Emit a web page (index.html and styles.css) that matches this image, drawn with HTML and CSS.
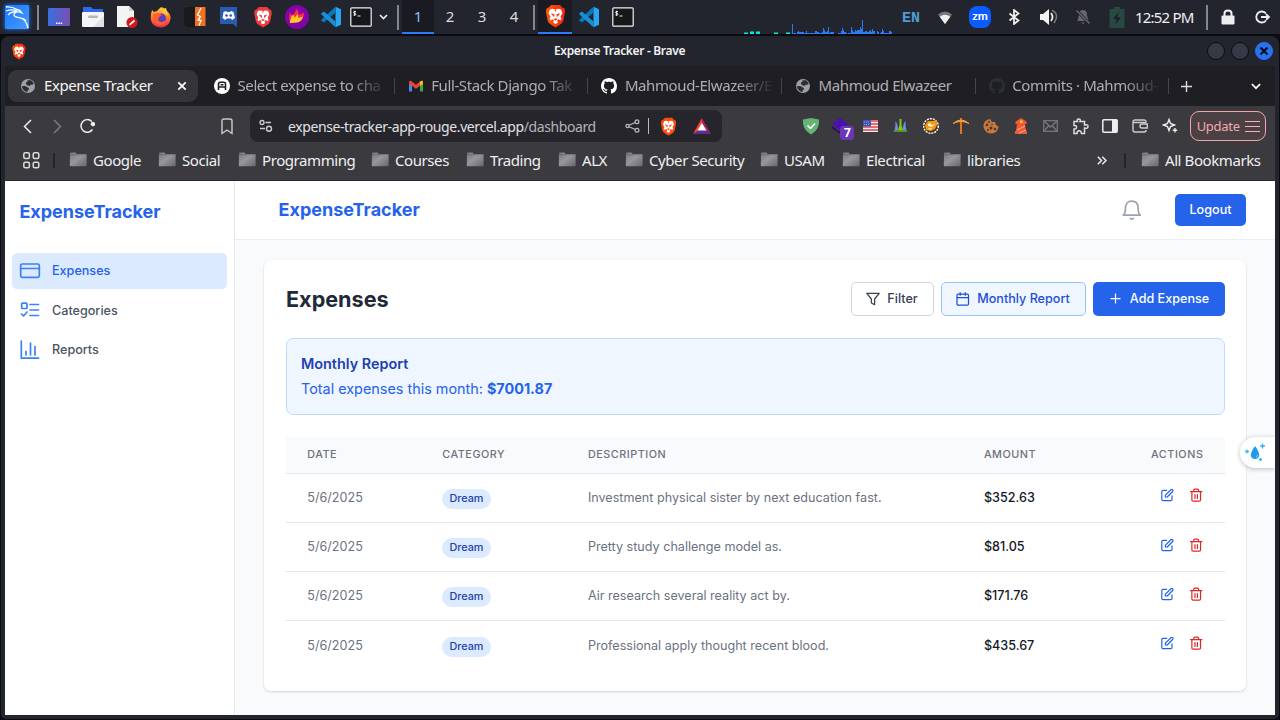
FILE: index.html
```html
<!DOCTYPE html>
<html lang="en">
<head>
<meta charset="utf-8">
<title>Expense Tracker</title>
<link rel="stylesheet" href="styles.css">
</head>
<body>
<svg class="defs" width="0" height="0">
  <defs>
    <linearGradient id="gKali" x2="1" y2="1"><stop stop-color="#1478ff"/><stop offset="1" stop-color="#4a9bff"/></linearGradient>
    <linearGradient id="gDesk" x2="1" y2="0"><stop stop-color="#3b6fe0"/><stop offset="1" stop-color="#7a4fb0"/></linearGradient>
    <linearGradient id="gFox" x2="0" y2="1"><stop stop-color="#ffd43a"/><stop offset=".5" stop-color="#ff7a2a"/><stop offset="1" stop-color="#f0265a"/></linearGradient>
    <linearGradient id="gBrave" x2="1" y2="0"><stop stop-color="#ff5a00"/><stop offset="1" stop-color="#f52010"/></linearGradient>
    <linearGradient id="gFolder" x2="1" y2="1"><stop stop-color="#77777b"/><stop offset=".45" stop-color="#98989c"/><stop offset="1" stop-color="#68686c"/></linearGradient>
    <symbol id="folder" viewBox="0 0 18 15"><path d="M1 1.500Q1 .5 2 .5h4.500l1.200 1.500H17q.6 0 .6.6V13.500q0 .7-.7.7H1.500q-.7 0-.7-.7z" fill="url(#gFolder)"/><path d="M1 2.700h16.500" stroke="#5c5c60" stroke-width=".6"/></symbol>
    <symbol id="lion" viewBox="0 0 20 24"><path d="M5.500 1h9l2 2.200L19 4.500l.6 3-1.800 9.500Q17 19.500 14 21l-4 2.500L6 21Q3 19.500 2.200 17L.4 7.500l.6-3 2.500-1.300z"/><path fill="#fff" d="M4.500 5.500 7 4.800 10 5.500l3-.7 2.500.7L17 9l-2 3.800 1 1.700-1 2-2-1.200-1.500 1.500 1 1.700L10 20l-2.500-1.500 1-1.700L7 15.300l-2 1.200-1-2 1-1.700L3 9z"/><path d="M5.500 9.200 9 10.300l-.3 3L6.500 11zM14.500 9.200 11 10.300l.3 3L13.500 11zM8 15l2-.8 2 .8-2 1.700zM9.300 5.500h1.400l-.7 3z"/></symbol>
    <symbol id="vscode" viewBox="0 0 22 22"><path d="M15.500.8 21 3.200v15.600l-5.500 2.400z" fill="#2aa5f2"/><path d="M15.500.8v5.700L4 16.500 1 14.500l1-1.500z" fill="#0879bd"/><path d="M15.500 21.200v-5.700L4 5.500 1 7.500 2 9z" fill="#1a8fd6"/></symbol>
    <symbol id="term" viewBox="0 0 22 20"><rect x=".8" y=".8" width="20.400" height="18.400" rx="1" fill="#151719" stroke="#f2f2f2" stroke-width="1.200"/><path d="M6 4.700q-2.500-.8-2.500.6 0 .9 1.200 1t1.200 1q0 1.300-2.500.6M4.700 3.700v5.200M7.500 9h3" fill="none" stroke="#fff" stroke-width=".9"/></symbol>
    <symbol id="globe" viewBox="0 0 16 16"><circle cx="8" cy="8" r="7" fill="#9ba0a7"/><path d="M1.800 8.200 4.500 8q2.500 0 3 1.500 1.500 0 1.500 1.200t-1.200 1.300L7.500 14Q3 13.500 1.800 8.200zM7.500 2.200h3.500l2.800 3-1.300 1.600H10.500L9.500 8 7.500 7.200 6 6V4.300L7.500 4z" fill="#2c2c31"/></symbol>
    <symbol id="github" viewBox="0 0 16 16"><path d="M8 0C3.580 0 0 3.580 0 8c0 3.540 2.290 6.530 5.470 7.590.4.070.55-.17.55-.38 0-.19-.01-.82-.01-1.490-2.010.37-2.530-.49-2.690-.94-.09-.23-.48-.94-.82-1.130-.28-.15-.68-.52-.01-.53.63-.01 1.080.58 1.230.82.72 1.210 1.870.87 2.330.66.07-.52.28-.87.510-1.070-1.780-.2-3.640-.89-3.640-3.950 0-.87.31-1.590.82-2.150-.08-.2-.36-1.020.08-2.120 0 0 .67-.21 2.200.82.64-.18 1.320-.27 2-.27s1.360.09 2 .27c1.530-1.040 2.200-.82 2.200-.82.44 1.100.16 1.920.08 2.120.51.56.82 1.270.82 2.150 0 3.070-1.870 3.750-3.650 3.950.29.25.54.73.54 1.480 0 1.070-.01 1.930-.01 2.200 0 .21.15.46.55.38A8.010 8.010 0 0 0 16 8c0-4.420-3.580-8-8-8z"/></symbol>
    <symbol id="edit" viewBox="0 0 24 24"><path d="M11 4H5a2 2 0 0 0-2 2v13a2 2 0 0 0 2 2h13a2 2 0 0 0 2-2v-6M18.200 2.900a2 2 0 0 1 2.900 2.900L12 15H9v-3z"/></symbol>
    <symbol id="trash" viewBox="0 0 24 24"><path d="M2.500 6h19M4.800 6v14a2 2 0 0 0 2 2h10.400a2 2 0 0 0 2-2V6M8 6V3.800A1.800 1.800 0 0 1 9.800 2h4.400A1.800 1.800 0 0 1 16 3.800V6M10 11v6.500M14 11v6.500"/></symbol>
  </defs>
</svg>

<div class="desktop">
  <div class="panel">
    <div class="launchers">
      <svg class="kali" width="26" height="26" viewBox="0 0 26 26"><rect x="1" y="1" width="24" height="24" rx="1" fill="url(#gKali)"/><path d="M2 3q6-.5 11 2.500M2 7q5-2 11-.5M4 11q3-3.500 9-3.500M13 5.500q3 .3 5 3.500-3-1.500-5-1M13 8q-4.500 1.500-2.500 4 1.500 1.500 5.500 1.800 6 .8 8 10.200M15.500 13.800q3.500.2 6.500 2.700" fill="none" stroke="#fff" stroke-width="1.300"/></svg>
      <i class="sep"></i>
      <div class="apps">
        <svg width="22" height="18" viewBox="0 0 22 18"><rect width="22" height="18" rx="1" fill="url(#gDesk)"/><path d="M8 15.200h1.500M10.300 15.200h1.500M12.600 15.200h1.500" stroke="#fff" stroke-width="1.400"/></svg>
        <svg width="22" height="20" viewBox="0 0 22 20"><path d="M1 0h8l2 2h10v5H1z" fill="#2c6bed"/><rect y="5" width="22" height="15" rx="1" fill="#f5f5f5"/><path d="M22 9v11H11z" fill="#e2e2e2"/><rect x="6" y="8.500" width="10" height="2.500" rx="1.200" fill="#b5b5b5"/></svg>
        <svg width="22" height="22" viewBox="0 0 22 22"><path d="M1 0h12l5 5v16H1z" fill="#f4f4f4"/><path d="M13 0v5h5z" fill="#ccc"/><circle cx="16" cy="16.500" r="5.500" fill="#d0181e"/><path d="m13.500 18.800 5-4.300" stroke="#fff" stroke-width="1.700"/></svg>
        <svg width="22" height="22" viewBox="0 0 22 22"><path d="M2 4l2 2 3-1 4-4 2 2 3-1 1 3q4 3 3.500 8Q19 21 11 21.500 2 21 .7 13 .5 8 2 4z" fill="url(#gFox)"/><circle cx="11" cy="12.500" r="5" fill="#5a3fc0"/><path d="M3 8l5-1 4 2-3 2-1 3q3 4 8 0-1 6-7 5-6-2-6-11z" fill="#ff5e2e"/><path d="M12 1q6 3 6 9-3-3-5-3z" fill="#ffc83a"/></svg>
        <svg width="22" height="22" viewBox="0 0 22 22"><path d="M0 3 3 1h8v20H3l-3-2z" fill="#17191d"/><path d="M11 1h10.500v19H11z" fill="#f4711f"/><path d="m17 2-3.500 7 3 1.500L14 14l3 .5-2 5" fill="none" stroke="#fff" stroke-width="1.300"/></svg>
        <svg width="20" height="21" viewBox="0 0 20 21"><path d="M1 0h17v20.500L14 17H1z" fill="#2b5bb0"/><path d="M4.500 5 7 4l1 1h3l1-1 2.500 1 1.500 6-3 2-1-1.500H7.500L6.500 13l-3-2z" fill="#fff"/><circle cx="7.500" cy="8.500" r="1.300" fill="#2b5bb0"/><circle cx="11.700" cy="8.500" r="1.300" fill="#2b5bb0"/></svg>
        <svg width="20" height="22" fill="#f0393d"><use href="#lion"/></svg>
        <svg width="24" height="24" viewBox="0 0 24 24"><circle cx="12" cy="12" r="12" fill="#8204a8"/><path d="M5 18Q3.500 11 5 7.500l2.500 4L11.500 4q3 3 2 6l5.500-2.500q0 6.500-4.500 9-4.500 1.500-9.500 1.500z" fill="#ff2a4c"/><path d="M5 18Q5 13 8 9.500q1.500 1 1.500 3.500L12.500 9q1.500 2 .5 4l5-1.500q-1.500 5.500-6 6z" fill="#ffc928"/></svg>
        <svg width="22" height="22"><use href="#vscode"/></svg>
      </div>
      <svg class="term1" width="22" height="20"><use href="#term"/></svg>
      <svg class="chev" width="9" height="6" viewBox="0 0 9 6"><path d="m1 1 3.500 3.500L8 1" fill="none" stroke="#eee" stroke-width="1.600"/></svg>
    </div>
    <i class="sep"></i>
    <div class="spaces"><span class="space active">1</span><span class="space">2</span><span class="space">3</span><span class="space">4</span></div>
    <i class="sep"></i>
    <div class="tasks">
      <span class="task active"><svg width="21" height="24" fill="url(#gBrave)"><use href="#lion"/></svg></span>
      <span class="task"><svg width="22" height="22"><use href="#vscode"/></svg></span>
      <span class="task"><svg width="22" height="20"><use href="#term"/></svg></span>
    </div>
    <svg class="graph" width="150" height="20" viewBox="0 0 150 20"><g fill="#05e8cf"><path d="M0 18h4v2H0zM6 17h4v3H6zM12 17h4v3h-4zM30 18h4v2h-4zM42 18h4v2h-4z"/></g><g fill="#148b82"><path d="M0 18h4v1H0zM6 17h4v1H6zM12 17h4v1h-4zM30 18h4v1h-4zM42 18h4v1h-4z"/></g><path fill="#2b7bf4" d="M48 20V10h1v9h3v1zM53 20v-2h1v-1h1v1h5v1h2v-2h1v2h8v-2h2v1h2v1h3v-1h1v-4h1v2h1v2h2v-1h1v-4h1v6h1v-1h4v2zM94 20v-1h3v-2h1v-3h1v2h1v2h2v1h1v1zM104 20v-1h3v-6h1v3h1v2h2v-2h1v1h1v-1h3v-3h1v2h1V6h1v12h2v-1h2v1h2v-1h1v-1h1v2h1v-3h1v2h2v3zM133 20v-3h1v1h1v2zM136 20v-1h1v-1h1v-3h1v2h1v2h5v-2h2v1h1v2z"/></svg>
    <div class="tray">
      <span class="lang">EN</span>
      <svg class="wifi" width="14" height="13" viewBox="0 0 14 13"><path d="M7 13 0 3.500Q7-2.500 14 3.500z" fill="#777"/><path d="M7 13 1.700 5.800Q7 1.500 12.300 5.800z" fill="#f0f0f0"/></svg>
      <span class="zm">zm</span>
      <svg class="bt" width="12" height="16" viewBox="0 0 12 16"><path d="m1.500 4.500 9 7L6 15V1l4.500 3.500-9 7" fill="none" stroke="#eee" stroke-width="1.800"/></svg>
      <svg class="vol" width="18" height="16" viewBox="0 0 18 16"><path d="M0 5h3l6-5v16l-6-5H0z" fill="#f3f3f3"/><path d="M11 4q3 4 0 8" fill="none" stroke="#eee" stroke-width="1.800"/><path d="M12 1.200Q20 5 14 14" fill="none" stroke="#777" stroke-width="1.500"/></svg>
      <svg class="mute" width="14" height="16" viewBox="0 0 14 16"><path d="M7 1q4 0 4 5l1.500 6H1.500L3 6q0-5 4-5zM5 13.500h4L7 15z" fill="#66676b"/><path d="m0 1 14 14" stroke="#23252e" stroke-width="3"/><path d="m.5 1.500 13 13" stroke="#6c6d70" stroke-width="1.300"/></svg>
      <svg class="batt" width="16" height="21" viewBox="0 0 16 21"><path d="M5 0h6v2h4.500v19H.5V2H5z" fill="#28493f"/><path d="M9.500 5 4 12h3.500L6.500 17 12 10.500H8.500z" fill="#18212b"/></svg>
      <span class="clock">12:52 PM</span>
      <i class="sep"></i>
      <svg class="lock" width="14" height="16" viewBox="0 0 14 16"><path d="M3.500 8V4.500q0-3 3.500-3t3.500 3V8" fill="none" stroke="#eee" stroke-width="2"/><rect x=".5" y="6.500" width="13" height="9" rx="1" fill="#eee"/></svg>
      <svg class="exit" width="16" height="14" viewBox="0 0 16 14"><path d="M11 3.500A5.500 5.500 0 1 0 11 10.500" fill="none" stroke="#eee" stroke-width="1.800"/><path d="M6 7h7M11 4.200 14 7l-3 2.800" fill="none" stroke="#eee" stroke-width="1.800"/></svg>
    </div>
  </div>

  <div class="window">
    <div class="titlebar">
      <svg width="14" height="17" fill="url(#gBrave)"><use href="#lion"/></svg>
      <span class="wtitle">Expense Tracker - Brave</span>
      <div class="wbtns"><i></i><i></i><b><svg width="10" height="10" viewBox="0 0 10 10"><path d="m1.500 1.500 7 7m0-7-7 7" stroke="#0b0f18" stroke-width="2.200"/></svg></b></div>
    </div>
    <div class="client">
      <div class="tabs">
        <div class="tab current"><svg width="16" height="16"><use href="#globe"/></svg><span class="label">Expense Tracker</span><svg class="close" width="10" height="10" viewBox="0 0 10 10"><path d="m1.300 1.300 7.400 7.400m0-7.400-7.400 7.400" stroke="#fff" stroke-width="1.700"/></svg></div>
        <div class="tab"><svg width="16" height="16" viewBox="0 0 16 16"><circle cx="8" cy="8" r="8" fill="#fff"/><path d="M4.500 12V6q0-1.700 1.700-1.700h3.600q1.700 0 1.700 1.700v6M4.500 9h7M6.500 6.700h3" fill="none" stroke="#1f1e23" stroke-width="1.600"/></svg><span class="label fade">Select expense to cha</span></div>
        <div class="tab"><svg width="16" height="16" viewBox="0 0 16 16"><path d="M1 13.500V3.500l3 2v8z" fill="#4285f4"/><path d="M12 13.500v-8l3-2v10z" fill="#34a853"/><path d="M12 3.500 14 2.500l1 1v2.500l-3 2z" fill="#fbbc04"/><path d="M1 3.500 2.500 2.600 8 6.700l4-3.200v4.200L8 10.800 1 5.700z" fill="#ea4335"/></svg><span class="label fade">Full-Stack Django Tak</span></div>
        <div class="tab"><svg width="16" height="16" fill="#fff"><use href="#github"/></svg><span class="label fade">Mahmoud-Elwazeer/E</span></div>
        <div class="tab"><svg width="16" height="16"><use href="#globe"/></svg><span class="label">Mahmoud Elwazeer</span></div>
        <div class="tab"><svg width="16" height="16" fill="#283034"><use href="#github"/></svg><span class="label fade">Commits · Mahmoud-</span></div>
        <svg class="plus" width="11" height="11" viewBox="0 0 11 11"><path d="M5.500 0v11M0 5.500h11" stroke="#ddd" stroke-width="1.400"/></svg>
        <svg class="more" width="10" height="7" viewBox="0 0 10 7"><path d="m.8 1 4.200 4.200L9.200 1" fill="none" stroke="#fff" stroke-width="1.700"/></svg>
      </div>
      <div class="toolbar">
        <svg class="back" width="9" height="15" viewBox="0 0 9 15"><path d="m8 1-6.500 6.500L8 14" fill="none" stroke="#eee" stroke-width="1.500"/></svg>
        <svg class="fwd" width="9" height="15" viewBox="0 0 9 15"><path d="m1 1 6.500 6.500L1 14" fill="none" stroke="#79797e" stroke-width="1.500"/></svg>
        <svg class="reload" width="17" height="16" viewBox="0 0 17 16"><path d="M12.800 3.500A6.300 6.300 0 1 0 13.500 11.500" fill="none" stroke="#eee" stroke-width="1.500"/><path d="M14 3.800q2.500.5 2 3.200-.8 2-3.200 1-2-1.500-.8-3.200.8-1 2-1z" fill="#eee"/></svg>
        <svg class="mark" width="12" height="17" viewBox="0 0 12 17"><path d="M1 3q0-2 2-2h6q2 0 2 2v12.500L6 12l-5 3.500z" fill="none" stroke="#ccc" stroke-width="1.400"/></svg>
        <div class="url">
          <svg width="14" height="14" viewBox="0 0 14 14" fill="none" stroke="#ccc" stroke-width="1.400"><circle cx="3" cy="3.500" r="2"/><path d="M6.500 3.500H12M1 9.500h5"/><circle cx="10" cy="9.700" r="2.500"/></svg>
          <span class="addr">expense-tracker-app-rouge.vercel.app<span class="path">/dashboard</span></span>
          <svg class="share" width="15" height="14" viewBox="0 0 15 14" fill="none" stroke="#bbb" stroke-width="1.200"><circle cx="12" cy="2.800" r="1.900"/><circle cx="12" cy="11.200" r="1.900"/><circle cx="2.500" cy="7" r="1.600"/><path d="M4 6.300 10.200 3.500M4 7.700l6.200 2.800"/></svg>
          <i class="bar"></i>
          <svg class="shield" width="17" height="19" fill="#ff4a0c"><use href="#lion"/></svg>
          <svg class="bat" width="18" height="16" viewBox="0 0 18 16"><path d="M9 0 0 16l9-5z" fill="#f9452c"/><path d="m9 0 9 16-9-5z" fill="#9e1f63"/><path d="m0 16 9-6 9 6z" fill="#5d2d91"/><path d="m9 5 4.500 7.500h-9z" fill="#fff"/></svg>
        </div>
        <div class="exts">
          <svg width="16" height="17" viewBox="0 0 16 17"><path d="M0 1.500 8 0l8 1.500Q17 11 8 16.500-1 11 0 1.500z" fill="#63b476"/><path d="m4.500 7.500 3 3 4.500-5" fill="none" stroke="#fff" stroke-width="1.500"/></svg>
          <span class="cube"><svg width="17" height="17" viewBox="0 0 17 17"><path d="m0 6 8-6 8 6-8 6z" fill="#4b0fb6"/><path d="m0 8 8 6v2L0 10z" fill="#2c0871"/></svg><b>7</b></span>
          <svg width="15" height="12" viewBox="0 0 15 12"><rect width="15" height="12" fill="#eee"/><path d="M0 1h15M0 4h15M0 7h15M0 10h15" stroke="#dd4450" stroke-width="1.500"/><rect width="8" height="6.500" fill="#4054b2"/><path d="M1 2h6M1 4.500h6" stroke="#bbc3ee" stroke-width=".7" stroke-dasharray="1"/></svg>
          <svg width="15" height="14" viewBox="0 0 15 14"><path d="M.5 13q2-2 2-11 2.500 3 3 11zM9.500 13q0-8 3-11 0 9 2 11z" fill="#6c8fe0"/><path d="M4.500 13 6.500 6V0h2v6l2 7z" fill="#86c51c"/><path d="M1 12h13" stroke="#50880e" stroke-width="1.500"/></svg>
          <svg width="16" height="16" viewBox="0 0 16 16"><circle cx="8" cy="8" r="7.300" fill="#4a3520" stroke="#fff" stroke-width="1.400" stroke-dasharray="2 1"/><path d="m2 7 3-4h5l4-1v5l-2 4-4 2-5-1z" fill="#f5980f"/><path d="m5 6 2-1 2 2 3-1-3 3-4-1zM5 10l4 .5-2 1.500z" fill="#fff1cf"/></svg>
          <svg width="16" height="16" viewBox="0 0 16 16"><path d="M8 0v16" stroke="#d9781c" stroke-width="2"/><path d="M0 5.500q8-7 16 0-8-4-16 0z" fill="#f5a13c" stroke="#f5a13c"/></svg>
          <svg width="16" height="16" viewBox="0 0 16 16"><path d="M7 1q-7 1-6.500 8Q2 15 8 15.500 15 15 15.500 8.500L13 7 12 4 9 4z" fill="#c5793c"/><g fill="#563222"><circle cx="4" cy="7" r="1.300"/><circle cx="8" cy="10" r="1.500"/><circle cx="6" cy="4" r="1"/><circle cx="12" cy="11" r="1.200"/><circle cx="5" cy="12" r="1"/></g><circle cx="9" cy="6.500" r="1" fill="#458"/></svg>
          <svg width="14" height="16" viewBox="0 0 14 16"><path d="M7 0 4 2 1.500 3.500V6h11V3.500L10 2zM3 6h8l1 7H2zM1 13h12v3H1z" fill="#f35a33"/><rect x="6" y="2.500" width="2.500" height="2.500" fill="#ffd84a"/><path d="M3 12 11 8M5 15l7-3" stroke="#ffb49c"/></svg>
          <svg width="15" height="12" viewBox="0 0 15 12" fill="none" stroke="#77777b" stroke-width="1.300"><rect x=".7" y=".7" width="13.600" height="10.600"/><path d="m1 1 6.500 6L14 1M1 11l4.500-5M14 11 9.500 6"/></svg>
          <svg width="17" height="17" viewBox="0 0 17 17" fill="none" stroke="#ddd" stroke-width="1.500"><path d="M2 3.500h3.500Q4.500 1 6.700 1T8 3.500h4.500V7Q16 6 16 8.500T12.500 10v5.500H9.500Q9 12.500 7 12.800T5 15.500H2V11q2.500.3 2.500-1.800T2 7.500z"/></svg>
          <svg width="16" height="14" viewBox="0 0 16 14"><rect x=".8" y=".8" width="14.400" height="12.400" rx="1" fill="none" stroke="#eee" stroke-width="1.500"/><path d="M10 1h5v12h-5z" fill="#eee"/></svg>
          <svg width="16" height="14" viewBox="0 0 16 14" fill="none" stroke="#ccc" stroke-width="1.400"><path d="M14 3.500V3q0-2-2-2H3Q1 1 1 3v8q0 2 2 2h9q2 0 2-1.500V11M1 3.500h11q2 0 2 1"/><path d="M15.300 5H10q-2 0-2 2t2 2h5.300z"/></svg>
          <svg width="16" height="16" viewBox="0 0 16 16" fill="none" stroke="#eee" stroke-width="1.400"><path d="m7 1.500 1.500 4 4 1.500-4 1.500-1.500 4-1.500-4-4-1.500 4-1.500zM13 10v4.500M10.700 12.300h4.500"/></svg>
        </div>
        <span class="update">Update<svg width="15" height="11" viewBox="0 0 15 11"><path d="M0 .5h15M0 5.500h15M0 10.500h15" stroke="#f5b1b5"/></svg></span>
      </div>
      <div class="bookmarks">
        <svg class="grid" width="17" height="17" viewBox="0 0 17 17" fill="none" stroke="#ddd" stroke-width="1.500"><rect x=".8" y=".8" width="5.600" height="5.600" rx="1.500"/><rect x="10.200" y=".8" width="5.600" height="5.600" rx="1.500"/><rect x=".8" y="10.200" width="5.600" height="5.600" rx="1.500"/><rect x="10.200" y="10.200" width="5.600" height="5.600" rx="1.500"/></svg>
        <i class="bsep"></i>
        <span class="bm bm-a"><svg width="18" height="15"><use href="#folder"/></svg>Google</span>
        <span class="bm bm-b"><svg width="18" height="15"><use href="#folder"/></svg>Social</span>
        <span class="bm bm-c"><svg width="18" height="15"><use href="#folder"/></svg>Programming</span>
        <span class="bm bm-d"><svg width="18" height="15"><use href="#folder"/></svg>Courses</span>
        <span class="bm bm-e"><svg width="18" height="15"><use href="#folder"/></svg>Trading</span>
        <span class="bm bm-f"><svg width="18" height="15"><use href="#folder"/></svg>ALX</span>
        <span class="bm bm-g"><svg width="18" height="15"><use href="#folder"/></svg>Cyber Security</span>
        <span class="bm bm-h"><svg width="18" height="15"><use href="#folder"/></svg>USAM</span>
        <span class="bm bm-i"><svg width="18" height="15"><use href="#folder"/></svg>Electrical</span>
        <span class="bm"><svg width="18" height="15"><use href="#folder"/></svg>libraries</span>
        <svg class="over" width="10" height="9" viewBox="0 0 10 9"><path d="m.8.800 3.700 3.700L.8 8.200M5.300.8 9 4.500 5.300 8.200" fill="none" stroke="#eee" stroke-width="1.500"/></svg>
        <i class="bsep right"></i>
        <span class="bm all"><svg width="18" height="15"><use href="#folder"/></svg>All Bookmarks</span>
      </div>

      <div class="page">
        <aside class="sidebar">
          <div class="brand">ExpenseTracker</div>
          <nav class="nav">
            <a class="item on"><svg width="22" height="22" viewBox="0 0 22 22"><rect x="1.700" y="4" width="18.600" height="13.400" rx="1.600"/><path d="M1.500 8.500h19"/></svg>Expenses</a>
            <a class="item"><svg width="22" height="22" viewBox="0 0 22 22"><rect x="2.700" y="4.200" width="5.300" height="5.300" rx=".8"/><path d="m2.500 15 2 2L8 13M11 5.500h8.500M11 11h8.500M11 16.500h8.500"/></svg>Categories</a>
            <a class="item"><svg width="22" height="22" viewBox="0 0 22 22"><path d="M2.300 2v17.200H19.500M7 12.500V16M11.500 4.200V16M16 7.500V16"/></svg>Reports</a>
          </nav>
        </aside>
        <section class="content">
          <header class="top">
            <div class="brand">ExpenseTracker</div>
            <svg class="bell" width="22" height="22" viewBox="0 0 22 22"><path d="M2.300 16.200q2.200-2 2.200-7 0-7 6.300-7t6.300 7q0 5 2.200 7zM8.800 19q2 2 4 0" fill="none" stroke="#9ca3af" stroke-width="1.700" stroke-linejoin="round"/></svg>
            <button class="btn solid logout">Logout</button>
          </header>
          <main class="main">
            <div class="card">
              <div class="head">
                <h1>Expenses</h1>
                <button class="btn plain filter"><svg width="14" height="14" viewBox="0 0 14 14"><path d="M.8 1.300h12.400L8.600 7v5.700L5.400 11V7z"/></svg>Filter</button>
                <button class="btn tint monthly"><svg width="14" height="14" viewBox="0 0 14 14"><rect x="1" y="2.200" width="11.500" height="11" rx="1.200"/><path d="M1 5.700h11.500M4.200.2v3.500M9.300.2v3.500"/></svg>Monthly Report</button>
                <button class="btn solid add"><svg width="14" height="14" viewBox="0 0 14 14"><path d="M6.500 1.500v10M1.500 6.500h10"/></svg>Add Expense</button>
              </div>
              <div class="report">
                <h2>Monthly Report</h2>
                <p>Total expenses this month: <b>$7001.87</b></p>
              </div>
              <table class="table">
                <colgroup><col class="c1"><col class="c2"><col class="c3"><col class="c4"><col></colgroup>
                <thead><tr><th>DATE</th><th>CATEGORY</th><th>DESCRIPTION</th><th>AMOUNT</th><th class="act">ACTIONS</th></tr></thead>
                <tbody>
                  <tr><td>5/6/2025</td><td><span class="pill">Dream</span></td><td>Investment physical sister by next education fast.</td><td class="amt">$352.63</td><td class="act"><div class="acts"><svg class="edit"><use href="#edit"/></svg><svg class="del"><use href="#trash"/></svg></div></td></tr>
                  <tr><td>5/6/2025</td><td><span class="pill">Dream</span></td><td>Pretty study challenge model as.</td><td class="amt">$81.05</td><td class="act"><div class="acts low"><svg class="edit"><use href="#edit"/></svg><svg class="del"><use href="#trash"/></svg></div></td></tr>
                  <tr><td>5/6/2025</td><td><span class="pill">Dream</span></td><td>Air research several reality act by.</td><td class="amt">$171.76</td><td class="act"><div class="acts low"><svg class="edit"><use href="#edit"/></svg><svg class="del"><use href="#trash"/></svg></div></td></tr>
                  <tr><td>5/6/2025</td><td><span class="pill">Dream</span></td><td>Professional apply thought recent blood.</td><td class="amt">$435.67</td><td class="act"><div class="acts"><svg class="edit"><use href="#edit"/></svg><svg class="del"><use href="#trash"/></svg></div></td></tr>
                </tbody>
              </table>
            </div>
          </main>
        </section>
        <div class="drop"><svg width="22" height="20" viewBox="0 0 22 20"><path d="M11 3q4.500 6 4.200 9.300-.4 3.700-4.200 3.700t-4.200-3.700Q6.800 9 11 3z" fill="#1e9bf0"/><path d="M12 14q1.500-.5 1.700-2" stroke="#8fd0ff" fill="none"/><path d="M18.500.5v5M16 3h5M3 6.500v4M1 8.500h4M16.500 15v3M15 16.500h3" stroke="#39b0f5" stroke-width="1.300"/></svg></div>
      </div>
    </div>
  </div>
</div>
</body>
</html>
```
FILE: styles.css
```css
* { box-sizing: border-box; }
body { margin: 0; overflow: hidden; font-family: "Noto Sans", sans-serif; }
svg { display: block; flex: none; }
i { flex: none; }
.defs { position: absolute; }
.desktop { width: 1280px; height: 720px; background: #0a0b10; display: flex; flex-direction: column; }

.panel { height: 34px; background: #23252e; display: flex; align-items: center; flex: none; }
.sep { width: 2px; height: 25px; background: #85868a; }
.launchers { display: flex; align-items: center; width: 397px; flex: none; padding-left: 4px; }
.kali { margin-right: 7px; filter: drop-shadow(0 0 2px #1478ff); }
.apps { display: grid; grid-template-columns: repeat(9, 34px); justify-items: center; align-items: center; margin-left: 3px; }
.term1 { margin-left: 2px; }
.chev { margin-left: 7px; }
.spaces { display: flex; margin-left: 3px; width: 131px; flex: none; }
.space { width: 32px; height: 34px; line-height: 32px; text-align: center; font-size: 15px; color: #dcdce0; }
.space.active { background: #1a1b22; border-bottom: 2px solid #2c78ff; color: #8fbcec; }
.tasks { display: flex; margin-left: 3px; }
.task { width: 34px; height: 34px; display: flex; align-items: center; justify-content: center; }
.task.active { background: #1a1b22; border-bottom: 2px solid #2c78ff; }
.graph { margin-left: 104px; align-self: flex-end; }
.tray { display: flex; align-items: center; flex: 1; }
.lang { margin: 3px 0 0 8px; width: 19px; font: bold 15px/20px "Liberation Mono", monospace; color: #4f9bd4; }
.wifi { margin-left: 17px; }
.zm { margin-left: 17px; width: 22px; height: 22px; border-radius: 8px; background: #0b5cff; color: #fff; font: bold 12px/20px Lato, sans-serif; text-align: center; flex: none; }
.bt { margin-left: 17px; }
.vol { margin-left: 20px; }
.mute { margin-left: 18px; }
.batt { margin-left: 19px; }
.clock { margin-left: 10px; margin-top: -1px; width: 59px; font-size: 15px; letter-spacing: -.8px; color: #f0f0f0; white-space: nowrap; }
.tray .sep { margin-left: 12px; }
.lock { margin-left: 13px; }
.exit { margin-left: 20px; }

.window { margin: 2px 1px 1px; flex: 1; background: #23252e; border-radius: 8px 8px 5px 5px; padding: 0 4px 4px; display: flex; flex-direction: column; }
.titlebar { height: 30px; display: flex; align-items: center; padding-left: 7px; flex: none; }
.wtitle { flex: 1; text-align: center; font-size: 12px; font-weight: 600; letter-spacing: -.33px; color: #f2f2f2; padding: 0 0 1px 6px; }
.wbtns { display: flex; gap: 6px; padding-right: 2px; }
.wbtns i, .wbtns b { width: 18px; height: 18px; border-radius: 50%; background: #363946; border: 1px solid #0b0c10; }
.wbtns b { background: #2672f3; border-color: #2672f3; display: flex; align-items: center; justify-content: center; }

.client { flex: 1; display: flex; flex-direction: column; width: 1270px; }
.tabs { height: 40px; background: #1f1e23; display: flex; align-items: center; padding-left: 3px; flex: none; font-size: 15px; color: #aeaeb2; }
.tab { width: 193.700px; height: 16px; padding-left: 13px; display: flex; align-items: center; border-right: 1px solid #45454a; flex: none; }
.tab.current { width: 190px; height: 32px; margin-right: 3px; padding-left: 12px; background: #353439; border: 0; border-radius: 9px; color: #f4f4f4; }
.label { margin-left: 7.500px; width: 149px; white-space: nowrap; letter-spacing: -.4px; line-height: 22px; padding-bottom: 2px; }
.current .label { margin-left: 8px; width: 134px; }
.fade { -webkit-mask-image: linear-gradient(90deg, #000 75%, transparent); mask-image: linear-gradient(90deg, #000 75%, transparent); }
.close { margin-left: -1px; }
.plus { margin-left: 12px; }
.more { margin-left: 59px; }

.toolbar { height: 40px; background: #3b3a3f; display: flex; align-items: center; flex: none; font-size: 14px; padding-left: 17.500px; }
.fwd { margin-left: 21px; }
.reload { margin-left: 17.500px; }
.mark { margin-left: 125px; }
.url { margin-left: 17px; width: 472px; height: 32px; border-radius: 8px; background: #26252b; display: flex; align-items: center; padding-left: 9px; flex: none; }
.addr { margin-left: 15px; width: 337px; color: #e2e2e4; white-space: nowrap; letter-spacing: -.4px; }
.path { color: #b4b4b8; }
.bar { width: 1px; height: 16px; background: #bbb; margin-left: 8px; }
.shield { margin-left: 11px; }
.bat { margin-left: 16px; }
.exts { margin-left: 74px; display: grid; grid-template-columns: repeat(13, 29.940px); justify-items: center; align-items: center; }
.cube { position: relative; }
.cube b { position: absolute; left: 8px; top: 8px; width: 14px; height: 14px; border-radius: 3px; background: #6b36b8; color: #fff; font: bold 12px/14px "Noto Sans", sans-serif; text-align: center; }
.update { margin-left: 5px; width: 76px; height: 30px; border: 1px solid #f0a6aa; border-radius: 9px; background: #4b4044; color: #f0aaae; font-size: 13px; letter-spacing: -.3px; display: flex; align-items: center; justify-content: center; gap: 5px; }

.bookmarks { height: 35px; background: #3b3a3f; border-bottom: 1px solid #29282d; display: flex; align-items: center; padding: 0 15px 6px 18px; flex: none; font-size: 15px; letter-spacing: -.42px; color: #f0f0f2; white-space: nowrap; }
.bm { display: flex; align-items: center; gap: 6px; flex: none; }
.bm svg { margin-top: -1px; }
.bsep { width: 2px; height: 15px; background: #25242a; margin: 0 14px 0 13px; }
.bm-a { width: 89px; } .bm-b { width: 80px; } .bm-c { width: 133px; } .bm-d { width: 95px; } .bm-e { width: 92px; }
.bm-f { width: 67px; } .bm-g { width: 135px; } .bm-h { width: 82px; } .bm-i { width: 101px; }
.over { margin-left: auto; margin-right: 4px; }
.bsep.right { margin: 0 15px 0 13px; }
.all { width: 119px; }

.page { position: relative; flex: 1; display: flex; background: #f9fafb; font-family: Inter, sans-serif; font-size: 12.600px; color: #6b7280; }
.sidebar { width: 230px; background: #fff; border-right: 1px solid #e5e7eb; padding: 18px 7px 0; flex: none; }
.brand { font-size: 18px; font-weight: 700; line-height: 25px; color: #2563eb; }
.sidebar .brand { padding-left: 7.400px; }
.nav { margin-top: 29px; display: flex; flex-direction: column; gap: 3.600px; }
.item { height: 36px; display: flex; align-items: center; gap: 11px; padding: 0 0 1px 7px; border-radius: 5.400px; font-weight: 500; color: #4b5563; }
.item.on { background: #dbeafe; color: #2563eb; }
.item svg { fill: none; stroke: #3b82f6; stroke-width: 1.700; stroke-linecap: round; stroke-linejoin: round; }
.content { flex: 1; display: flex; flex-direction: column; }
.top { height: 59px; background: #fff; border-bottom: 1px solid #eceef1; display: flex; align-items: center; padding: 0 29px 0 43.500px; flex: none; }
.top .brand { padding-bottom: 2px; }
.bell { margin-left: auto; }
.btn { font: 500 12.600px/18px Inter, sans-serif; border-radius: 5px; border: 1px solid transparent; display: flex; align-items: center; justify-content: center; gap: 7px; padding: 0; height: 34px; flex: none; }
.btn svg { fill: none; stroke: currentColor; stroke-width: 1.250; stroke-linejoin: round; }
.solid { background: #2563eb; color: #fff; }
.plain { background: #fff; border-color: #d1d5db; color: #374151; }
.tint { background: #eff6ff; border-color: #93c5fd; color: #1d4ed8; }
.filter, .monthly { padding-right: 1px; }
.logout { width: 71px; height: 32px; margin-left: 32px; }
.main { padding: 20px 29px 0; }
.card { background: #fff; border-radius: 7px; height: 431px; padding: 22px 21px 0 22px; box-shadow: 0 1px 3px rgba(0,0,0,.1), 0 1px 2px rgba(0,0,0,.06); }
.head { display: flex; align-items: center; gap: 7px; }
.head h1 { margin: 0 auto 0 0; font-size: 21.600px; line-height: 34px; font-weight: 700; color: #1f2937; }
.filter { width: 83px; } .monthly { width: 145px; } .add { width: 132px; }
.report { margin-top: 22px; height: 77px; border: 1px solid #bfdbfe; border-radius: 7px; background: #eff6ff; padding: 14px; font-size: 14.400px; line-height: 21.600px; color: #2563eb; }
.report h2 { margin: 0 0 3.600px; font-size: 14.400px; line-height: 21.600px; font-weight: 600; color: #1e40af; }
.report p { margin: 0; }
.table { margin-top: 22px; width: 939px; border-collapse: separate; border-spacing: 0; table-layout: fixed; }
.c1 { width: 135px; } .c2 { width: 145.600px; } .c3 { width: 396px; } .c4 { width: 142px; }
th { height: 37px; padding: 0 21.600px 2px 21.300px; background: #f9fafb; font-size: 10.800px; letter-spacing: .54px; font-weight: 500; text-align: left; border-bottom: 1px solid #e5e7eb; }
td { height: 49px; padding: 0 21.600px 2px 21.300px; border-bottom: 1px solid #e5e7eb; white-space: nowrap; }
tr:last-child td { border-bottom: 0; height: 50px; }
.act { text-align: right; }
.amt { font-weight: 500; color: #111827; }
.pill { display: inline-block; height: 20px; margin-top: 4px; padding: 0 7.200px; border-radius: 10px; background: #dbeafe; color: #1e40af; font-size: 10.800px; line-height: 20px; font-weight: 500; vertical-align: middle; }
.acts { display: flex; justify-content: flex-end; gap: 14.400px; margin-top: -3px; }
.acts.low { margin-top: -1px; }
.acts svg { width: 14.400px; height: 14.400px; fill: none; stroke-width: 2; stroke-linecap: round; stroke-linejoin: round; }
.edit { stroke: #2563eb; } .del { stroke: #dc2626; }
.drop { position: absolute; right: 0; top: 256px; width: 35px; height: 31px; border-radius: 16px 0 0 16px; background: #fff; box-shadow: 0 1px 5px rgba(0,0,0,.25); clip-path: inset(-8px 0 -8px -8px); padding: 6px 0 0 4px; }
```
